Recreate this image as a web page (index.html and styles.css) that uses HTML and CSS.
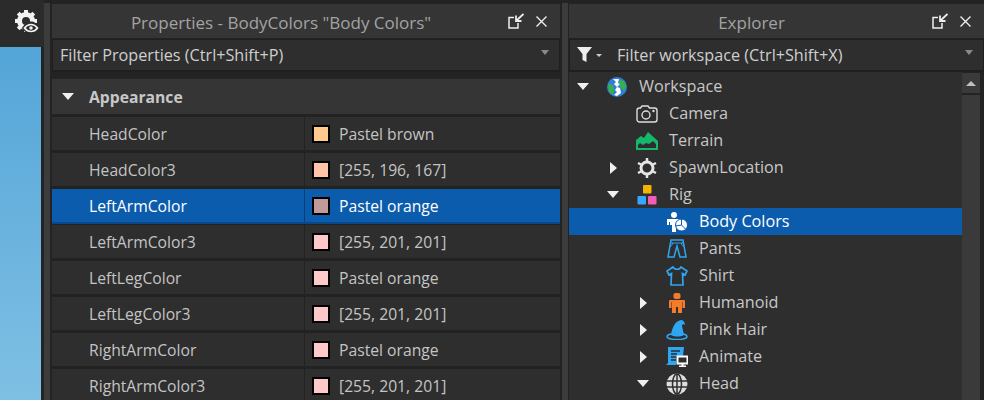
FILE: index.html
```html
<!DOCTYPE html>
<html lang="en">
<head>
    <meta charset="UTF-8">
    <title>Properties and Explorer</title>
    <link rel="stylesheet" href="styles.css">
</head>
<body>
<div class="studio">
    <div class="side">
        <div class="side-tool">
            <svg width="24" height="24" viewBox="0 0 24 24">
                <g fill="none" stroke="#f2f2f2">
                    <circle cx="11" cy="11" r="6.500" stroke-width="5"/>
                    <path stroke-width="4" d="M11 0v4M11 18v4M0 11h4M18 11h4M3.200 3.200l2.800 2.800M16 16l2.800 2.800M3.200 18.800L6 16M16 6l2.800-2.800"/>
                </g>
                <path fill="#2b2b2b" d="M7 18c3-5 6-6.500 9-6.500s6 1.500 8 6.500c-2 5-5 6-8 6s-6-1-9-6z"/>
                <path fill="none" stroke="#f2f2f2" stroke-width="1.700" d="M9.500 18c2-2.700 4-3.500 6.500-3.500s4.500.8 6.500 3.500c-2 2.700-4 3.500-6.500 3.500s-4.500-.8-6.500-3.500z"/>
                <circle cx="16" cy="18" r="1.800" fill="#f2f2f2"/>
            </svg>
        </div>
        <div class="viewport"></div>
    </div>
    <div class="splitter"></div>

    <section class="panel props">
        <header class="title">
            <span class="title-text">Properties - BodyColors "Body Colors"</span>
            <svg class="undock" width="16" height="16" viewBox="0 0 16 16"><path fill="none" stroke="#eee" stroke-width="1.500" d="M6 4.500H1V15h9v-5"/><path fill="none" stroke="#eee" stroke-width="1.800" d="M15.500 1L8 8M8 2.500V8h5.500"/></svg>
            <svg class="close" width="11" height="11" viewBox="0 0 11 11"><path stroke="#eee" stroke-width="1.400" d="M.5.5l10 10M10.500.5l-10 10"/></svg>
        </header>
        <div class="filter">
            <span class="filter-text">Filter Properties (Ctrl+Shift+P)</span>
            <span class="drop"></span>
        </div>
        <div class="group">
            <span class="arrow-down"></span>
            <span>Appearance</span>
        </div>
        <div class="row"><div class="name">HeadColor</div><div class="val"><i class="swatch c-brown"></i>Pastel brown</div></div>
        <div class="row"><div class="name">HeadColor3</div><div class="val"><i class="swatch c-peach"></i>[255, 196, 167]</div></div>
        <div class="row selected"><div class="name">LeftArmColor</div><div class="val"><i class="swatch c-dim"></i>Pastel orange</div></div>
        <div class="row"><div class="name">LeftArmColor3</div><div class="val"><i class="swatch c-pink"></i>[255, 201, 201]</div></div>
        <div class="row"><div class="name">LeftLegColor</div><div class="val"><i class="swatch c-pink"></i>Pastel orange</div></div>
        <div class="row"><div class="name">LeftLegColor3</div><div class="val"><i class="swatch c-pink"></i>[255, 201, 201]</div></div>
        <div class="row"><div class="name">RightArmColor</div><div class="val"><i class="swatch c-pink"></i>Pastel orange</div></div>
        <div class="row"><div class="name">RightArmColor3</div><div class="val"><i class="swatch c-pink"></i>[255, 201, 201]</div></div>
    </section>
    <div class="splitter splitter-mid"></div>

    <section class="panel explorer">
        <header class="title">
            <span class="title-text">Explorer</span>
            <svg class="undock" width="16" height="16" viewBox="0 0 16 16"><path fill="none" stroke="#eee" stroke-width="1.500" d="M6 4.500H1V15h9v-5"/><path fill="none" stroke="#eee" stroke-width="1.800" d="M15.500 1L8 8M8 2.500V8h5.500"/></svg>
            <svg class="close" width="11" height="11" viewBox="0 0 11 11"><path stroke="#eee" stroke-width="1.400" d="M.5.5l10 10M10.500.5l-10 10"/></svg>
        </header>
        <div class="filter">
            <svg class="funnel" width="26" height="18" viewBox="0 0 26 18"><path fill="#eee" d="M0 1h15L9.500 8v8l-4-2V8z"/><path fill="#ccc" d="M19 8h6l-3 3z"/></svg>
            <span class="filter-text">Filter workspace (Ctrl+Shift+X)</span>
            <span class="drop"></span>
        </div>
        <div class="tree-wrap">
            <div class="tree">
                <div class="node d0"><span class="arrow-down"></span>
                    <svg class="icon" width="22" height="20" viewBox="0 0 22 20"><circle cx="11" cy="10" r="10" fill="#2f7fd8"/><path fill="#35b04a" d="M2 7l5 1 1 4-1 6-4-3z"/><path fill="#35b04a" d="M13 3l5 1 2 5-2 5-4-4z"/><path fill="#fff" d="M7 2l6 0-1 4 2 1-3 3-3-3 2-2zM11 10l3 1 1 5-4 3-3-1 3-3-2-2z"/></svg>
                    <span class="label">Workspace</span></div>
                <div class="node d1">
                    <svg class="icon" width="22" height="18" viewBox="0 0 22 18"><rect x="1" y="3" width="20" height="14" rx="2.500" fill="none" stroke="#ddd" stroke-width="1.400"/><path fill="#2e2e2e" d="M5 1h8v3H5z"/><path fill="none" stroke="#ddd" stroke-width="1.400" d="M4.500 3l1.500-2h6l1.500 2"/><circle cx="10" cy="10" r="4" fill="none" stroke="#ddd" stroke-width="1.400"/><circle cx="17.500" cy="6" r="1.200" fill="#ddd"/></svg>
                    <span class="label">Camera</span></div>
                <div class="node d1">
                    <svg class="icon" width="22" height="18" viewBox="0 0 22 18"><path fill="#14b86a" d="M0 18V8l5-4 3 2 4-6 10 9v9zM2 16h18v-4l-3-3-4 3-3-1-3 2-3-2-2 2z"/></svg>
                    <span class="label">Terrain</span></div>
                <div class="node d1 has-arrow"><span class="arrow-right"></span>
                    <svg class="icon" width="22" height="20" viewBox="0 0 22 20"><circle cx="11" cy="10" r="6" fill="none" stroke="#e6e6e6" stroke-width="3"/><path stroke="#e6e6e6" stroke-width="2.500" d="M11 0v3M11 17v3M2 5l3 1.500M17 13.500l3 1.500M2 15l3-1.500M17 6.500L20 5"/></svg>
                    <span class="label">SpawnLocation</span></div>
                <div class="node d1 has-arrow"><span class="arrow-down"></span>
                    <svg class="icon" width="20" height="20" viewBox="0 0 20 20"><rect x="6" y="0" width="8.500" height="8.500" rx="1" fill="#f5b400"/><rect x="0.500" y="11" width="8.500" height="8.500" rx="1" fill="#35a7ff"/><rect x="11" y="11" width="8.500" height="8.500" rx="1" fill="#f25cb5"/></svg>
                    <span class="label">Rig</span></div>
                <div class="node d2 selected">
                    <svg class="icon" width="22" height="20" viewBox="0 0 22 20"><circle cx="8" cy="3" r="3" fill="#fff"/><path fill="#fff" d="M1 7h13l-3 3-1 2v8H6v-7H4v-3H3v3H1z"/><circle cx="15.500" cy="13" r="6" fill="#fff" stroke="#0b5cad" stroke-width="1"/><path stroke="#0b5cad" fill="none" d="M15.500 7v6l4 4M15.500 13l-6 1"/></svg>
                    <span class="label">Body Colors</span></div>
                <div class="node d2">
                    <svg class="icon" width="22" height="20" viewBox="0 0 22 20"><path fill="none" stroke="#2ea6f2" stroke-width="1.500" d="M5 1h12l3 17h-6L11 7l-3 11H2z"/><path fill="none" stroke="#2ea6f2" d="M4.500 4h13M6.500 4c0 2-1 3-2.500 3.500M15.500 4c0 2 1 3 2.500 3.500"/></svg>
                    <span class="label">Pants</span></div>
                <div class="node d2">
                    <svg class="icon" width="22" height="20" viewBox="0 0 22 20"><path fill="none" stroke="#2ea6f2" stroke-width="1.700" d="M7 1L1 5l2 4 2.500-1.500L5 19h12l-.5-11.500L19 9l2-4-6-4c-1 3-7 3-8 0z"/></svg>
                    <span class="label">Shirt</span></div>
                <div class="node d2 has-arrow"><span class="arrow-right"></span>
                    <svg class="icon" width="22" height="20" viewBox="0 0 22 20"><rect x="7.500" y="0" width="7" height="6" rx="2" fill="#f47b2a"/><path fill="#f47b2a" d="M4 7h14a1 1 0 0 1 1 1v7h-2.500V9H16v11h-4v-6h-2v6H6V9h-.5v6H3V8a1 1 0 0 1 1-1z"/></svg>
                    <span class="label">Humanoid</span></div>
                <div class="node d2 has-arrow"><span class="arrow-right"></span>
                    <svg class="icon" width="22" height="20" viewBox="0 0 22 20"><path fill="#2ea6f2" d="M5 15C6 8 9 1 15 0c2 0 4 2 4 5-1-1-3-1-3 1l2 9c-4 2-9 2-13 0z"/><ellipse cx="11" cy="16.500" rx="10" ry="3" fill="none" stroke="#2ea6f2" stroke-width="1.500"/></svg>
                    <span class="label">Pink Hair</span></div>
                <div class="node d2 has-arrow"><span class="arrow-right"></span>
                    <svg class="icon" width="22" height="20" viewBox="0 0 22 20"><path fill="#2ea6f2" d="M2 0h16l-1 9h-5v9H0l2-2z"/><path stroke="#2e2e2e" stroke-width="1.500" d="M5 4h9M5 7h6M5 10h5M5 13h5"/><rect x="10" y="9" width="12" height="11" fill="#2e2e2e"/><rect x="11.500" y="9.500" width="10" height="7" fill="none" stroke="#fff" stroke-width="2"/><path stroke="#fff" stroke-width="2" d="M16.500 16v3M13 19.500h7"/></svg>
                    <span class="label">Animate</span></div>
                <div class="node d2 has-arrow-down"><span class="arrow-down"></span>
                    <svg class="icon" width="22" height="22" viewBox="0 0 22 22"><circle cx="11" cy="11" r="10.500" fill="#ddd"/><g fill="none" stroke="#2e2e2e" stroke-width="1.500"><ellipse cx="11" cy="11" rx="4.500" ry="10"/><path d="M1 8h20M1 14h20M11 1v20"/></g></svg>
                    <span class="label">Head</span></div>
            </div>
            <div class="scrollbar">
                <div class="scroll-btn"><span class="scroll-up"></span></div>
                <div class="scroll-track"></div>
            </div>
        </div>
    </section>
</div>
</body>
</html>
```

FILE: styles.css
```css
html, body {
    margin: 0;
    padding: 0;
    height: 400px;
    overflow: hidden;
    background-color: #232323;
}

body {
    font-family: "Open Sans", "Noto Sans", sans-serif;
    font-size: 15.7px;
    color: #d0d0d0;
}

.studio {
    display: flex;
    height: 400px;
}

.side {
    width: 44px;
    display: flex;
    flex-direction: column;
    flex: none;
}

.side-tool {
    height: 47px;
    box-sizing: border-box;
    padding: 10px 0 0 15px;
    background-color: #2b2b2b;
}

.viewport {
    flex: 1;
    margin-right: 3px;
    background: linear-gradient(180deg, #54a5d8, #7fc0e4);
}

.splitter {
    width: 6px;
    flex: none;
    margin: 3px 2px 0 0;
    background-color: #3c3c3c;
}

.splitter-mid {
    margin: 3px 1px 0 2px;
}

.panel {
    display: flex;
    flex-direction: column;
    padding-top: 4px;
    min-width: 0;
}

.props {
    width: 508px;
    flex: none;
}

.explorer {
    flex: 1;
}

.title {
    height: 34px;
    flex: none;
    display: flex;
    align-items: center;
    position: relative;
    justify-content: flex-end;
    padding-right: 13px;
    background-color: #353535;
}

.title-text {
    position: absolute;
    left: 0;
    right: 50px;
    top: 7px;
    text-align: center;
    font-size: 17px;
    color: #a3a3a3;
}

.undock {
    margin-right: 12px;
}

.filter {
    height: 33px;
    flex: none;
    margin-top: 1px;
    display: flex;
    align-items: center;
    padding: 0 10px 0 7px;
    background-color: #2e2e2e;
    border: 1px solid #1f1f1f;
    border-bottom-width: 2px;
    box-sizing: border-box;
    font-size: 16.2px;
    color: #cfcfcf;
}

.filter-text {
    flex: 1;
}

.funnel {
    margin-right: 14px;
}

.drop {
    width: 0;
    height: 0;
    border-left: 4px solid transparent;
    border-right: 4px solid transparent;
    border-top: 5px solid #8a8a8a;
    margin-top: -6px;
}

.group {
    height: 38px;
    flex: none;
    margin-top: 6px;
    display: flex;
    align-items: center;
    padding-left: 10px;
    background-color: #353535;
    border-top: 1px solid #262626;
    border-bottom: 2px solid #222;
    box-sizing: border-box;
    font-weight: 700;
    color: #c8c8c8;
}

.group .arrow-down {
    margin-right: 15px;
}

.arrow-down {
    width: 0;
    height: 0;
    flex: none;
    border-left: 6px solid transparent;
    border-right: 6px solid transparent;
    border-top: 7px solid #f0f0f0;
}

.arrow-right {
    width: 0;
    height: 0;
    flex: none;
    border-top: 6px solid transparent;
    border-bottom: 6px solid transparent;
    border-left: 7px solid #f0f0f0;
}

.row {
    height: 36px;
    flex: none;
    display: flex;
    box-sizing: border-box;
    background-color: #2e2e2e;
    border-top: 1px solid #222;
    border-bottom: 2px solid #222;
    line-height: 35px;
}

.row .name {
    width: 253px;
    flex: none;
    box-sizing: border-box;
    padding-left: 37px;
    border-right: 1px solid #222;
    color: #c4c4c4;
}

.row .val {
    flex: 1;
    display: flex;
    align-items: center;
    padding: 1px 0 0 7px;
    color: #c4c4c4;
}

.row.selected {
    background-color: #0b5cad;
    border-bottom-color: #07478a;
}

.row.selected .name,
.row.selected .val {
    color: #fff;
    border-right-color: #0a3f75;
}

.swatch {
    width: 18px;
    height: 18px;
    margin-right: 9px;
    border: 2px solid #000;
    box-sizing: border-box;
    flex: none;
}

.c-brown { background-color: #ffc88c; }
.c-peach { background-color: #ffc4a7; }
.c-pink { background-color: #ffc9c9; }
.c-dim { background-color: #c29a9a; }

.tree-wrap {
    flex: 1;
    display: flex;
    min-height: 0;
}

.tree {
    flex: 1;
    padding-top: 1px;
    background-color: #2e2e2e;
    font-size: 16.2px;
}

.node {
    height: 27px;
    display: flex;
    align-items: center;
    position: relative;
    color: #c8c8c8;
}

.node .icon {
    flex: none;
    width: 22px;
    margin-right: 11px;
}

.node .label {
    margin-top: -2px;
}

.node .arrow-down,
.node .arrow-right {
    position: absolute;
}

.d0 { padding-left: 37px; }
.d1 { padding-left: 67px; }
.d2 { padding-left: 97px; }

.d0 .arrow-down { left: 8px; }
.d1 .arrow-right { left: 41px; }
.d1 .arrow-down { left: 38px; }
.d2 .arrow-right { left: 71px; }
.d2 .arrow-down { left: 68px; }

.node.selected {
    background-color: #0b5cad;
    color: #fff;
}

.scrollbar {
    width: 22px;
    flex: none;
    display: flex;
    flex-direction: column;
    padding-right: 4px;
    box-sizing: border-box;
    background-color: #232323;
}

.scroll-btn {
    height: 22px;
    flex: none;
    box-sizing: border-box;
    margin-top: 1px;
    display: flex;
    align-items: center;
    justify-content: center;
    background-color: #3a3a3a;
    border-bottom: 2px solid #232323;
}

.scroll-up {
    width: 0;
    height: 0;
    border-left: 5px solid transparent;
    border-right: 5px solid transparent;
    border-bottom: 5px solid #c0c0c0;
}

.scroll-track {
    flex: 1;
    background-color: #3a3a3a;
}
```
